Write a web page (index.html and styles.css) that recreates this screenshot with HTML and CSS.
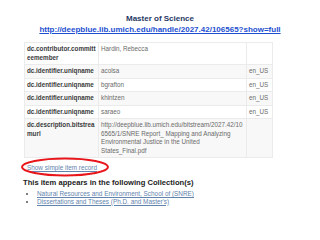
FILE: index.html
```html
<!DOCTYPE html>
<html lang="en">
<head>
    <meta charset="UTF-8">
    <meta name="viewport" content="width=device-width, initial-scale=1.0">
    <title>Master of Science</title>
    <link rel="stylesheet" href="styles.css">
</head>
<body>
    <div class="page">
        <header class="heading">
            <h1>Master of Science</h1>
            <a href="#" class="source-link">http://deepblue.lib.umich.edu/handle/2027.42/106565?show=full</a>
        </header>

        <table class="meta">
            <colgroup>
                <col class="col-key">
                <col class="col-value">
                <col class="col-lang">
            </colgroup>
            <tr>
                <td class="key">dc.contributor.committeemember</td>
                <td class="value">Hardin, Rebecca</td>
                <td class="lang"></td>
            </tr>
            <tr>
                <td class="key">dc.identifier.uniqname</td>
                <td class="value">acolsa</td>
                <td class="lang">en_US</td>
            </tr>
            <tr>
                <td class="key">dc.identifier.uniqname</td>
                <td class="value">bgrafton</td>
                <td class="lang">en_US</td>
            </tr>
            <tr>
                <td class="key">dc.identifier.uniqname</td>
                <td class="value">khintzen</td>
                <td class="lang">en_US</td>
            </tr>
            <tr>
                <td class="key">dc.identifier.uniqname</td>
                <td class="value">saraeo</td>
                <td class="lang">en_US</td>
            </tr>
            <tr>
                <td class="key">dc.description.bitstreamurl</td>
                <td class="value">http://deepblue.lib.umich.edu/bitstream/2027.42/106565/1/SNRE Report_ Mapping and Analyzing Environmental Justice in the United States_Final.pdf</td>
                <td class="lang"></td>
            </tr>
        </table>

        <div class="simple">
            <a href="#" class="simple-link">Show simple item record</a>
            <svg class="marker" width="92" height="22" viewBox="0 0 92 22">
                <ellipse cx="45" cy="11" rx="43" ry="8.5" fill="none" stroke="#e8151b" stroke-width="2"/>
            </svg>
        </div>

        <h2 class="collections-title">This item appears in the following Collection(s)</h2>
        <ul class="collections">
            <li><a href="#">Natural Resources and Environment, School of (SNRE)</a></li>
            <li><a href="#">Dissertations and Theses (Ph.D. and Master's)</a></li>
        </ul>
    </div>
</body>
</html>
```

FILE: styles.css
```css
body {
    margin: 0;
    background-color: white;
    font-family: 'Liberation Sans', Arial, sans-serif;
}
.page {
    width: 320px;
    height: 240px;
    padding: 13px 24px 0;
    box-sizing: border-box;
    overflow: hidden;
}
.heading {
    text-align: center;
    margin: 0 -24px;
}
h1 {
    margin: 0;
    font-size: 8px;
    line-height: 11px;
    color: #1f3864;
}
.source-link {
    display: block;
    font-size: 8px;
    font-weight: bold;
    line-height: 11px;
    color: #1d4fd0;
}
.meta {
    width: 248px;
    margin-top: 7px;
    border-collapse: collapse;
    table-layout: fixed;
    font-size: 6.3px;
    line-height: 8.5px;
}
.col-key {
    width: 74px;
}
.col-value {
    width: 148px;
}
.col-lang {
    width: 26px;
}
.meta td {
    padding: 2px 1.5px 2px 2px;
    border: 1px solid #ebebeb;
    vertical-align: top;
    overflow-wrap: anywhere;
}
.meta tr:nth-child(even) td {
    background-color: #f8f8f8;
}
.key {
    font-weight: bold;
    color: #3a3a3a;
}
.value, .lang {
    color: #6a6a6a;
}
.simple {
    position: relative;
    margin-top: 5px;
    padding-left: 3px;
    font-size: 6.4px;
    line-height: 9px;
}
.simple-link {
    color: #6283ad;
}
.marker {
    position: absolute;
    left: -4px;
    top: -7px;
}
.collections-title {
    margin: 6px 0 0 -1px;
    font-size: 7.6px;
    line-height: 10px;
    color: #222;
}
.collections {
    margin: 2px 0 0;
    padding-left: 13px;
    font-size: 6.4px;
    line-height: 7.5px;
    color: #555;
}
.collections a {
    color: #6283ad;
}
```
